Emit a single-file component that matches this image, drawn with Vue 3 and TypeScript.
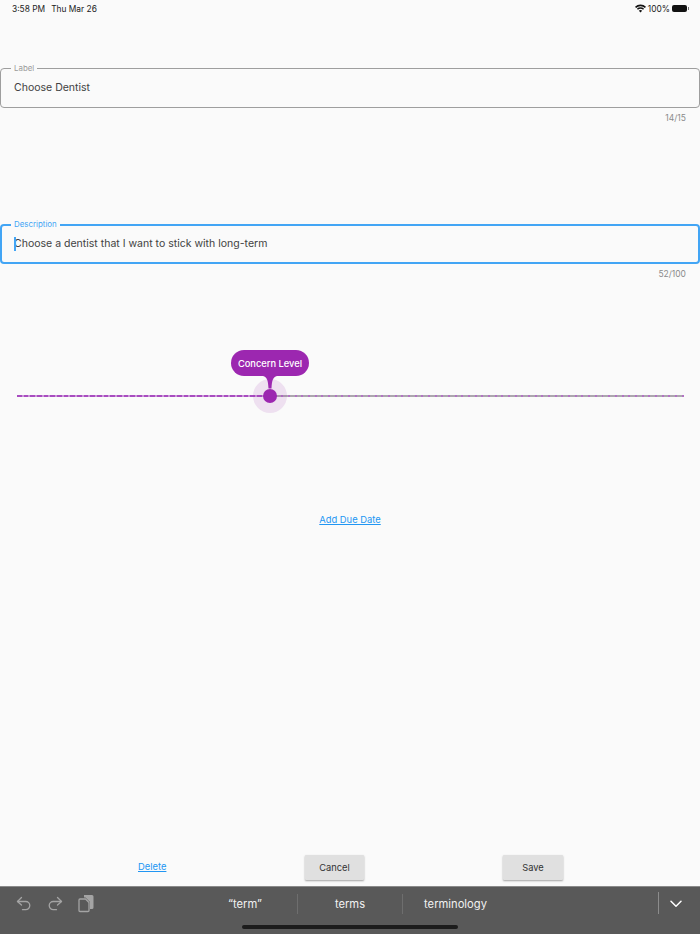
<script setup lang="ts">
const suggestions: string[] = ['“term”', 'terms', 'terminology']
</script>

<template>
  <div class="page">
    <header class="status">
      <div class="status-left"><span>3:58 PM</span><span>Thu Mar 26</span></div>
      <div class="status-right">
        <svg width="11" height="9" viewBox="0 0 11 9"><path d="M5.5 8.6 3.8 6.7a2.5 2.5 0 0 1 3.4 0Z M2.9 5.8 1.9 4.7a5.3 5.3 0 0 1 7.2 0l-1 1.1a3.9 3.9 0 0 0-5.2 0Z M1.1 3.9 0 2.8a8 8 0 0 1 11 0L9.9 3.9a6.5 6.5 0 0 0-8.8 0Z" fill="#111"/></svg>
        <span>100%</span>
        <span class="battery"></span>
      </div>
    </header>

    <section class="field field-label">
      <fieldset class="box"><legend>Label</legend><span class="value">Choose Dentist</span></fieldset>
      <div class="counter">14/15</div>
    </section>

    <section class="field field-desc">
      <fieldset class="box focused"><legend>Description</legend><span class="caret"></span><span class="value">Choose a dentist that I want to stick with long-term</span></fieldset>
      <div class="counter">52/100</div>
    </section>

    <section class="slider">
      <div class="track"><div class="track-active"></div><div class="track-rest"></div></div>
      <div class="halo"></div>
      <div class="thumb"></div>
      <svg class="stem" width="14" height="13" viewBox="0 0 14 13"><path d="M0 0C4 1 5 4 5.500 12.500L8.500 12.500C9 4 10 1 14 0Z" fill="#9c27b0"/></svg>
      <div class="bubble">Concern Level</div>
    </section>

    <div class="due"><a class="link">Add Due Date</a></div>

    <div class="actions">
      <a class="link delete">Delete</a>
      <button class="btn cancel">Cancel</button>
      <button class="btn save">Save</button>
    </div>

    <footer class="keyboard">
      <div class="kb-tools">
        <svg width="16" height="16" viewBox="0 0 16 16" fill="none" stroke="#a4a4a4" stroke-width="1.3" stroke-linecap="round" stroke-linejoin="round"><path d="M5.5 1.500 1.500 5.500l4 3.500"/><path d="M1.500 5.500h8.200a4.100 4.100 0 0 1 0 8.200H6.500"/></svg>
        <svg width="16" height="16" viewBox="0 0 16 16" fill="none" stroke="#a4a4a4" stroke-width="1.3" stroke-linecap="round" stroke-linejoin="round"><path d="m10.500 1.500 4 4-4 3.500"/><path d="M14.500 5.500H6.300a4.100 4.100 0 0 0 0 8.200h3.200"/></svg>
        <svg width="16" height="19" viewBox="0 0 16 19"><path d="M6 1h8A1.500 1.500 0 0 1 15.500 2.500v11A1.500 1.500 0 0 1 14 15h-2V8L7.500 3.500H6Z" fill="#a4a4a4"/><path d="M2 5h5.500L11 8.500v8a1 1 0 0 1-1 1H2a1 1 0 0 1-1-1V6a1 1 0 0 1 1-1Z" fill="#595959" stroke="#a4a4a4" stroke-width="1.300"/></svg>
      </div>
      <div class="kb-suggestions">
        <span v-for="s in suggestions" :key="s" class="suggestion">{{ s }}</span>
      </div>
      <div class="kb-end">
        <svg width="12" height="8" viewBox="0 0 12 8" fill="none" stroke="#fff" stroke-width="1.500" stroke-linecap="round" stroke-linejoin="round"><path d="m1 1.300 5 5 5-5"/></svg>
      </div>
      <div class="home"></div>
    </footer>
  </div>
</template>

<style>
body { margin: 0; background: #fafafa; }
</style>

<style scoped>
.page {
  width: 700px;
  height: 934px;
  display: flex;
  flex-direction: column;
  background: #fafafa;
  font-family: Inter, Roboto, "Liberation Sans", sans-serif;
  overflow: hidden;
  color: #424242;
}
.status {
  height: 16px;
  box-sizing: border-box;
  padding: 1px 11px 0 12px;
  display: flex;
  justify-content: space-between;
  align-items: center;
  font-size: 8.400px;
  color: #222;
}
.status-left { display: flex; gap: 6px; }
.status-right { display: flex; align-items: center; gap: 2px; }
.battery {
  width: 15px;
  height: 7px;
  border-radius: 2px;
  display: block;
  margin: 0 2px 0 0;
  background: #111;
  position: relative;
}
.battery::after {
  content: "";
  position: absolute;
  right: -2px;
  top: 2px;
  width: 1.500px;
  height: 3px;
  background: #777;
}
.field-label { margin-top: 47px; }
.field-desc { margin-top: 95px; }
.box {
  position: relative;
  margin: 0;
  height: 45px;
  box-sizing: border-box;
  border: 1px solid #9e9e9e;
  border-radius: 4px;
  padding: 0 13px;
  display: flex;
  align-items: center;
  min-width: 0;
}
.box legend {
  font-size: 7.900px;
  line-height: 11px;
  padding: 0 3px;
  margin-left: -3px;
  color: #9a9a9a;
  height: 11px;
}
.box .value {
  font-size: 10.520px;
  color: #424242;
  margin-top: -7px;
}
.focused { border: 2px solid #42a5f5; padding: 0 12px; }
.focused legend { color: #42a5f5; }
.focused .value { margin-top: -6px; }
.caret {
  position: absolute;
  left: 12px;
  top: 7px;
  width: 1.500px;
  height: 14px;
  background: #42a5f5;
}
.counter {
  margin-top: 5px;
  padding-right: 14px;
  text-align: right;
  font-size: 8.500px;
  line-height: 11px;
  color: #8a8a8a;
}
.slider {
  position: relative;
  height: 0;
  margin-top: 116px;
}
.track {
  position: absolute;
  left: 17px;
  right: 16px;
  top: -1px;
  height: 2px;
  display: flex;
}
.track-active {
  width: 253px;
  background: repeating-linear-gradient(90deg, #a84cc0 0 4.670px, #cb98d8 4.670px 6.670px);
}
.track-rest {
  flex: 1;
  background: repeating-linear-gradient(90deg, #aca6ae 0 4.670px, #b272c4 4.670px 6.670px);
}
.halo {
  position: absolute;
  left: 253px;
  top: -17px;
  width: 34px;
  height: 34px;
  border-radius: 50%;
  background: rgba(156, 39, 176, 0.12);
}
.thumb {
  position: absolute;
  left: 263px;
  top: -7px;
  width: 14px;
  height: 14px;
  border-radius: 50%;
  background: #9c27b0;
}
.stem {
  position: absolute;
  left: 263px;
  top: -20px;
}
.bubble {
  position: absolute;
  left: 231px;
  top: -46px;
  width: 78px;
  height: 26px;
  border-radius: 13px;
  background: #9c27b0;
  color: #fff;
  font-size: 9.300px;
  font-weight: 500;
  display: flex;
  align-items: center;
  justify-content: center;
}
.link {
  font-size: 9.400px;
  color: #2196f3;
  text-decoration: underline;
}
.due {
  margin-top: 115px;
  text-align: center;
  line-height: 12px;
}
.actions {
  margin-top: auto;
  margin-bottom: 3px;
  height: 32px;
  display: grid;
  grid-template-columns: 305px 198px 60px;
  align-items: center;
}
.delete { margin: -2px 0 0 138px; }
.btn {
  height: 25px;
  border: 0;
  border-radius: 1px;
  background: #e0e0e0;
  color: #333;
  font-family: inherit;
  font-size: 9.300px;
  box-shadow: 0 1px 2px rgba(0, 0, 0, 0.35);
  padding: 0;
}
.cancel { width: 59px; }
.save { width: 60px; }
.keyboard {
  height: 48px;
  background: #595959;
  border-top: 1px solid #8a8a8a;
  box-sizing: border-box;
  display: flex;
  align-items: center;
  position: relative;
  padding-bottom: 14px;
}
.kb-tools { display: flex; gap: 15px; padding-left: 16px; align-items: center; width: 128px; }
.kb-suggestions { display: grid; grid-template-columns: repeat(3, 105px); margin-left: 49px; }
.suggestion {
  font-size: 11.200px;
  color: #f2f2f2;
  text-align: center;
  border-right: 1px solid #6e6e6e;
  line-height: 20px;
}
.suggestion:last-child { border-right: 0; }
.kb-end {
  position: absolute;
  right: 0;
  top: 5px;
  height: 22px;
  width: 42px;
  padding-right: 8px;
  box-sizing: border-box;
  border-left: 1px solid #8c8c8c;
  display: flex;
  align-items: center;
  justify-content: center;
}
.kb-end svg { margin-top: 2px; }
.home {
  position: absolute;
  left: 242px;
  bottom: 5px;
  width: 216px;
  height: 4px;
  border-radius: 2px;
  background: #1c1c1c;
}
</style>
